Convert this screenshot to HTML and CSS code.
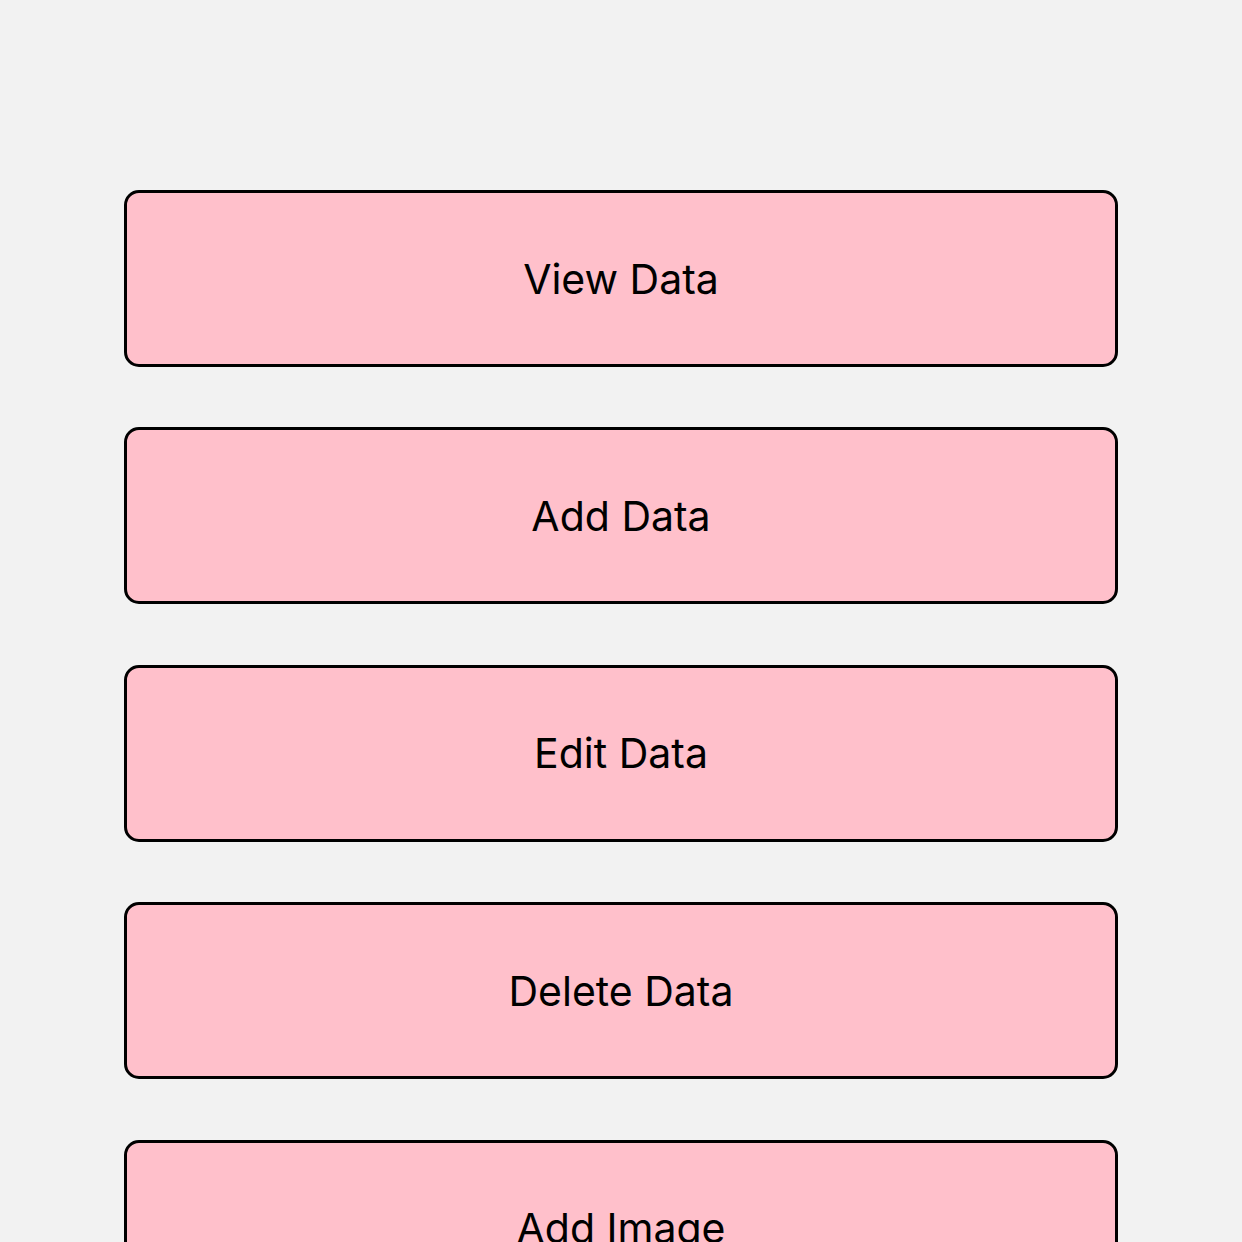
FILE: index.html
```html
<!DOCTYPE html>
<html>
<head>
<meta charset="utf-8">
<link rel="stylesheet" href="styles.css">
</head>
<body>
<div class="menu">
  <button class="btn">View Data</button>
  <button class="btn">Add Data</button>
  <button class="btn">Edit Data</button>
  <button class="btn">Delete Data</button>
  <button class="btn">Add Image</button>
</div>
</body>
</html>
```
FILE: styles.css
```css
html, body {
  margin: 0;
  padding: 0;
  background: #f2f2f2;
  height: 100%;
  overflow: hidden;
}
.menu {
  display: flex;
  flex-direction: column;
  gap: 60.4px;
  width: 994px;
  margin: 0 auto;
  padding-top: 190px;
}
.btn {
  box-sizing: border-box;
  height: 177px;
  width: 100%;
  flex-shrink: 0;
  background: #ffc0cb;
  border: 3px solid #000;
  border-radius: 15px;
  font-family: Inter, "Noto Sans", sans-serif;
  font-size: 41px;
  color: #000;
  display: flex;
  align-items: center;
  justify-content: center;
  padding: 0;
}
```
